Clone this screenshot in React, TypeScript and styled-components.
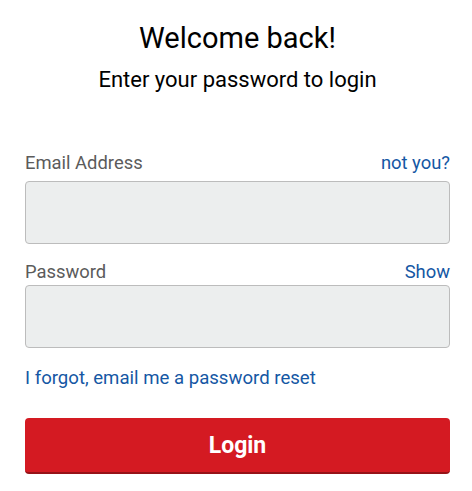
import React from "react";
import styled, { createGlobalStyle } from "styled-components";

const Global = createGlobalStyle`
  html, body { margin: 0; padding: 0; background: #ffffff; }
  body { font-family: Roboto, "Liberation Sans", Arial, sans-serif; }
  * { box-sizing: border-box; }
`;

const Page = styled.div`
  display: flex;
  flex-direction: column;
  padding: 21px 22px 0 25px;
`;

const Header = styled.header`
  display: flex;
  flex-direction: column;
  align-items: center;
  margin-bottom: 59px;
`;

const Title = styled.h1`
  margin: 0;
  font-size: 29px;
  line-height: 34px;
  font-weight: 400;
  color: #000;
`;

const Subtitle = styled.p`
  margin: 12px 0 0;
  font-size: 22px;
  line-height: 26px;
  font-weight: 400;
  color: #000;
`;

const Field = styled.div<{ $gap: number }>`
  display: flex;
  flex-direction: column;
  margin-bottom: ${(p) => p.$gap}px;
`;

const LabelRow = styled.div<{ $space: number }>`
  display: flex;
  justify-content: space-between;
  align-items: baseline;
  height: 26px;
  margin-bottom: ${(p) => p.$space}px;
`;

const Label = styled.label`
  font-size: 18.4px;
  line-height: 22px;
  color: #5b5b5b;
`;

const LinkText = styled.a`
  font-size: 18.4px;
  line-height: 22px;
  color: #1557a4;
  text-decoration: none;
  cursor: pointer;
`;

const Input = styled.input`
  height: 63px;
  width: 100%;
  border: 1px solid #bcbcbc;
  border-radius: 4px;
  background: #eceeee;
  font-size: 18px;
  padding: 0 12px;
  outline: none;
`;

const Forgot = styled(LinkText)`
  align-self: flex-start;
  font-size: 18.6px;
  line-height: 24px;
`;

const LoginButton = styled.button`
  margin-top: 28px;
  height: 56px;
  width: 100%;
  border: none;
  border-bottom: 2px solid #961318;
  border-radius: 4px;
  background: #d41a22;
  color: #ffffff;
  font-family: Roboto, "Liberation Sans", Arial, sans-serif;
  font-size: 23px;
  font-weight: 700;
  cursor: pointer;
`;

export default function App() {
  return (
    <>
      <Global />
      <Page>
        <Header>
          <Title>Welcome back!</Title>
          <Subtitle>Enter your password to login</Subtitle>
        </Header>
        <Field $gap={17}>
          <LabelRow $space={3}>
            <Label>Email Address</Label>
            <LinkText>not you?</LinkText>
          </LabelRow>
          <Input type="email" />
        </Field>
        <Field $gap={18}>
          <LabelRow $space={-2}>
            <Label>Password</Label>
            <LinkText>Show</LinkText>
          </LabelRow>
          <Input type="password" />
        </Field>
        <Forgot>I forgot, email me a password reset</Forgot>
        <LoginButton>Login</LoginButton>
      </Page>
    </>
  );
}
